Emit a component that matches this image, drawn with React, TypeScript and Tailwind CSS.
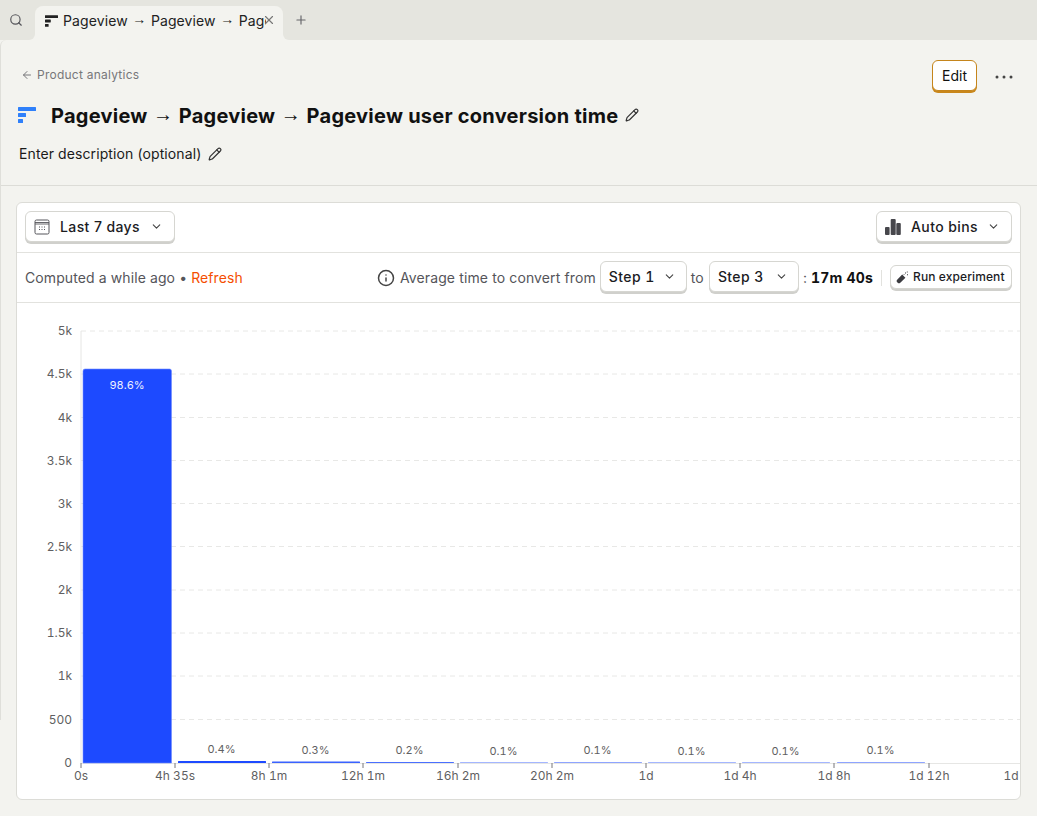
import React from 'react';
import { ArrowLeft, ChevronDown, Info, Pencil, Plus, Search, X } from 'lucide-react';

const yTicks = [
  { label: '5k', y: 331 },
  { label: '4.5k', y: 374 },
  { label: '4k', y: 417.5 },
  { label: '3.5k', y: 460.5 },
  { label: '3k', y: 503.5 },
  { label: '2.5k', y: 546.5 },
  { label: '2k', y: 590 },
  { label: '1.5k', y: 633 },
  { label: '1k', y: 676 },
  { label: '500', y: 719.5 },
  { label: '0', y: 762.5 },
];

const xTicks = [
  { label: '0s', x: 81 },
  { label: '4h 35s', x: 175 },
  { label: '8h 1m', x: 269 },
  { label: '12h 1m', x: 363 },
  { label: '16h 2m', x: 458 },
  { label: '20h 2m', x: 552 },
  { label: '1d', x: 646 },
  { label: '1d 4h', x: 740 },
  { label: '1d 8h', x: 834 },
  { label: '1d 12h', x: 929 },
  { label: '1d', x: 1011 },
];

const bars = [
  { x: 178, y: 761, color: '#1d4aff', pct: '0.4%', labelY: 753 },
  { x: 272, y: 761.5, color: '#3a62ff', pct: '0.3%', labelY: 754 },
  { x: 366, y: 762, color: '#4a6fff', pct: '0.2%', labelY: 754 },
  { x: 460, y: 762, color: '#a4b6ff', pct: '0.1%', labelY: 755 },
  { x: 554, y: 762, color: '#8ea4ff', pct: '0.1%', labelY: 754 },
  { x: 648, y: 762, color: '#a4b6ff', pct: '0.1%', labelY: 755 },
  { x: 742, y: 762, color: '#a4b6ff', pct: '0.1%', labelY: 755 },
  { x: 837, y: 762, color: '#8ea4ff', pct: '0.1%', labelY: 754 },
];

const FunnelIcon = ({ className }: { className: string }) => (
  <svg viewBox="0 0 18 16" className={className} fill="currentColor">
    <rect x="0" y="0" width="18" height="4" rx="0.5" />
    <rect x="0" y="6" width="8" height="4" rx="0.5" />
    <rect x="0" y="12" width="5" height="4" rx="0.5" />
  </svg>
);

const CalendarIcon = () => (
  <svg width="16" height="16" viewBox="0 0 16 16" fill="none" stroke="#55555a" strokeWidth="1">
    <rect x="1" y="1" width="14" height="14" rx="1.5" />
    <path d="M1 3.500h14M1 5h14" strokeWidth="0.9" />
    <path d="M5 8h1M7.5 8h1M10 8h1M5 10.5h1M7.5 10.500h1M10 10.5h1" />
  </svg>
);

const BarsIcon = () => (
  <svg width="16" height="16" viewBox="0 0 16 16" fill="#47474c">
    <rect x="0" y="8" width="4.600" height="8" rx="1" />
    <rect x="5.700" y="0" width="5" height="16" rx="1" />
    <rect x="11.300" y="4" width="4.500" height="12" rx="1" />
  </svg>
);

const TubeIcon = () => (
  <svg width="13" height="13" viewBox="0 0 13 13" fill="#3b3b40">
    <path d="M6.200 3.600 9.400 6.800 4.600 11.600a2.200 2.200 0 0 1-3.200-3.200z" />
    <path d="M9 1.500h1v1H9zM11 3.200h1v1h-1zM10.800.6h.9v.9h-.9zM7.600 3.200h.9v.9h-.9z" />
  </svg>
);

const Arrow = () => (
  <span className="font-['Liberation_Sans',sans-serif] font-normal align-[1.5px] mx-[0.5px]">→</span>
);

const Chip = ({ className, children }: { className: string; children: React.ReactNode }) => (
  <button
    className={`flex items-center bg-white border border-[#d6d6d1] rounded-md shadow-[0_2px_0_#d0d0cc] text-[#1c1c1f] tracking-[0.4px] ${className}`}
  >
    {children}
  </button>
);

const Chart = () => (
  <svg viewBox="17 303 1003 496" className="block w-full h-[496px] tabular-nums" fontFamily="Inter, sans-serif">
    {yTicks.slice(0, -1).map((t) => (
      <line key={t.label} x1="81" x2="1020" y1={t.y} y2={t.y} stroke="#e8e8e6" strokeDasharray="5 4" />
    ))}
    <line x1="81" x2="81" y1="331" y2="763" stroke="#e6e6e4" />
    <line x1="81" x2="1020" y1="763.5" y2="763.5" stroke="#e6e6e4" />
    {yTicks.map((t) => (
      <text key={t.label} x="72" y={t.y + 4} textAnchor="end" fontSize="12" fill="#5f5f62">
        {t.label}
      </text>
    ))}
    {xTicks.map((t, i) => (
      <g key={i}>
        {i < 10 && <line x1={t.x} x2={t.x} y1="763" y2="768" stroke="#77777a" />}
        <text x={t.x} y="780" textAnchor="middle" fontSize="12" fill="#5f5f62">
          {t.label}
        </text>
      </g>
    ))}
    <path
      d="M83 763V371a2 2 0 0 1 2-2h84.500a2 2 0 0 1 2 2v392z"
      fill="#1d4aff"
      stroke="#6f8bff"
      strokeWidth="0.6"
    />
    <text x="127" y="389" textAnchor="middle" fontSize="11" fill="#eef1ff">
      98.6%
    </text>
    {bars.map((b) => (
      <g key={b.x}>
        <rect x={b.x} y={b.y} width="88" height={763 - b.y} rx="0.5" fill={b.color} />
        <text x={b.x + 43.5} y={b.labelY} textAnchor="middle" fontSize="11" fill="#5f5f62">
          {b.pct}
        </text>
      </g>
    ))}
  </svg>
);

export default function App() {
  return (
    <div className="w-[1037px] h-[816px] overflow-hidden bg-[#f3f3ef] font-['Inter',sans-serif] text-[#111]">
      <div className="flex items-end h-10 bg-[#e5e5df]">
        <div className="w-[32px] h-10 flex items-center justify-center text-[#55555a]">
          <Search size={14} />
        </div>
        <div className="w-[3px] h-[34px]" />
        <div className="relative flex items-start h-[35px] w-[248px] -mb-px pl-[10px] pt-[3px] bg-[#f3f3ef] rounded-t-lg">
          <div className="absolute -left-[6px] bottom-px w-[6px] h-[6px] bg-[#f3f3ef]">
            <div className="w-full h-full bg-[#e5e5df] rounded-br-[6px]" />
          </div>
          <div className="absolute -right-[6px] bottom-px w-[6px] h-[6px] bg-[#f3f3ef]">
            <div className="w-full h-full bg-[#e5e5df] rounded-bl-[6px]" />
          </div>
          <FunnelIcon className="w-[13px] h-[12px] text-[#222] mt-[6px] mr-[5px] shrink-0" />
          <span className="text-sm tracking-[0.1px] whitespace-nowrap overflow-hidden w-[203px] text-[#222]">
            Pageview <Arrow /> Pageview <Arrow /> Pageview user conversion time
          </span>
          <X size={14} className="absolute right-[7px] top-[7px] text-[#777]" />
        </div>
        <div className="w-9 h-10 flex items-center justify-center text-[#66666a]">
          <Plus size={14} />
        </div>
      </div>

      <div className="h-[680px] border-l border-[#dfdfda] rounded-tl-md">
        <div className="h-[146px] border-b border-[#dcdcd7] relative">
          <div className="flex items-center pt-[27px] pl-[20px] gap-[4px] text-xs tracking-[0.24px] text-[#77777a]">
            <ArrowLeft size={12} />
            <span>Product analytics</span>
          </div>
          <div className="flex items-center mt-[17px] pl-[17px]">
            <FunnelIcon className="w-[18px] h-[16px] text-[#2f80fa] mr-[15px]" />
            <h1 className="text-xl font-bold leading-7 tracking-[0.25px] text-[#111]">
              Pageview <Arrow /> Pageview <Arrow /> Pageview user conversion time
            </h1>
            <Pencil size={14} className="ml-[7px] text-[#333]" />
          </div>
          <div className="flex items-center mt-[14px] pl-[18px] text-sm tracking-[0.1px] text-[#1a1a1a]">
            <span>Enter description (optional)</span>
            <Pencil size={14} className="ml-[7px] text-[#333]" />
          </div>
          <button className="absolute left-[931px] top-[20px] w-[45px] h-[31px] bg-white border border-[#c5851c] rounded-md shadow-[0_2px_0_#c9871b] text-sm">
            Edit
          </button>
          <svg width="20" height="6" viewBox="0 0 20 6" fill="#444" className="absolute left-[993px] top-[34px]">
            <circle cx="3" cy="3" r="1.500" />
            <circle cx="10" cy="3" r="1.500" />
            <circle cx="17" cy="3" r="1.500" />
          </svg>
        </div>

        <div className="ml-[15px] mt-4 w-[1005px] h-[598px] bg-white border border-[#dcdcd7] rounded-md">
          <div className="h-[50px] flex items-center justify-between px-2 border-b border-[#e2e2de]">
            <Chip className="w-[150px] h-[31px] mb-[2px] pl-2 pr-[11px]">
              <CalendarIcon />
              <span className="ml-[10px] text-sm font-medium">Last 7 days</span>
              <ChevronDown size={13} className="ml-auto text-[#444]" />
            </Chip>
            <Chip className="w-[136px] h-[31px] mb-[2px] pl-2 pr-[11px]">
              <BarsIcon />
              <span className="ml-[10px] text-sm font-medium">Auto bins</span>
              <ChevronDown size={13} className="ml-auto text-[#444]" />
            </Chip>
          </div>
          <div className="h-[50px] flex items-center justify-between pl-2 pr-2 border-b border-[#e2e2de] text-sm tracking-[0.1px] text-[#55555a]">
            <div>
              Computed a while ago • <span className="text-[#f54e00]">Refresh</span>
            </div>
            <div className="flex items-center">
              <Info size={18} className="text-[#444] mr-[5px]" />
              <span className="tracking-[0.12px]">Average time to convert from</span>
              <Chip className="ml-[4px] w-[87px] h-[31px] mb-[2px] pl-2 pr-[10px]">
                <span className="text-sm font-medium tabular-nums">Step 1</span>
                <ChevronDown size={13} className="ml-auto text-[#444]" />
              </Chip>
              <span className="ml-[4px]">to</span>
              <Chip className="ml-[5px] w-[90px] h-[31px] mb-[2px] pl-2 pr-[10px]">
                <span className="text-sm font-medium tabular-nums">Step 3</span>
                <ChevronDown size={13} className="ml-auto text-[#444]" />
              </Chip>
              <span className="ml-[4px]">:</span>
              <span className="ml-[4px] font-bold tracking-[0.2px] tabular-nums text-[#111]">17m 40s</span>
              <span className="ml-[8px] mr-[8px] w-px h-[16px] bg-[#e2e2de]" />
              <Chip className="w-[122px] h-[24px] mb-[1px] pl-[5px] pr-1 !tracking-[0.1px]">
                <TubeIcon />
                <span className="ml-[4px] text-xs font-medium">Run experiment</span>
              </Chip>
            </div>
          </div>
          <Chart />
        </div>
      </div>
    </div>
  );
}
